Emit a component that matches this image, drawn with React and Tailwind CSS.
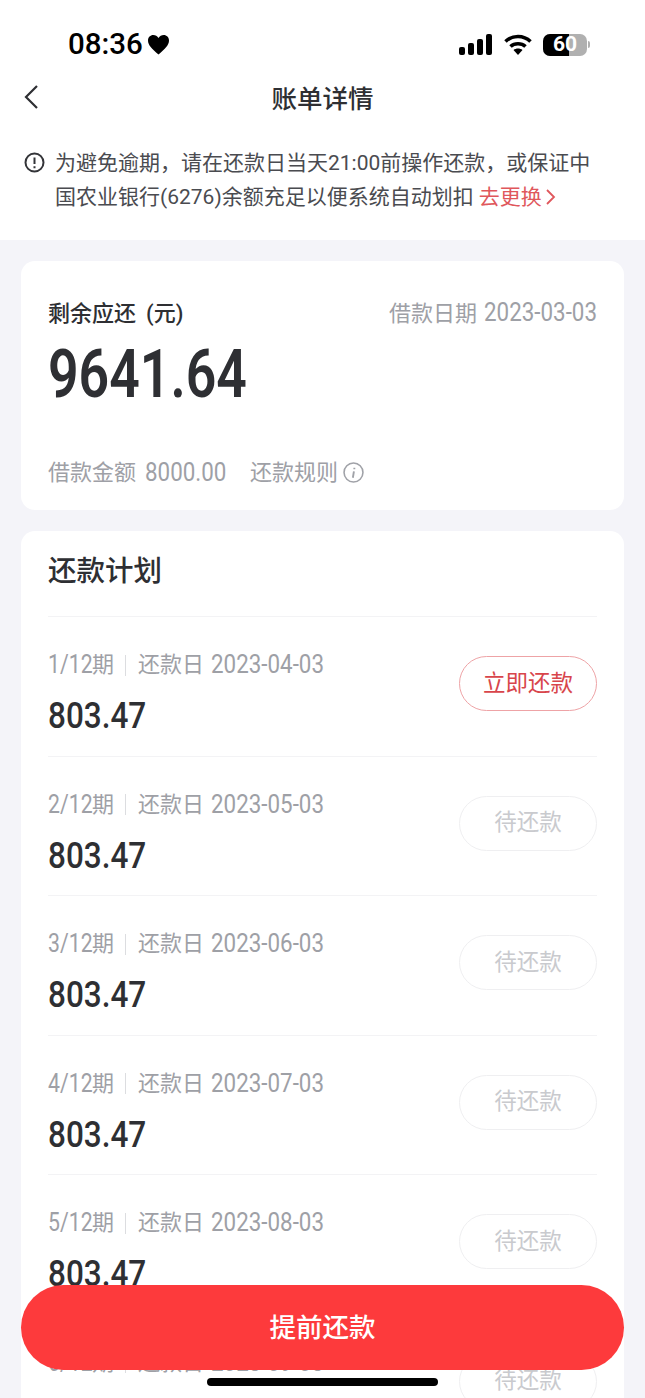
import React from "react";

const font = { fontFamily: '"Roboto", "Noto Sans CJK SC", sans-serif' };
const rows = [
  ["1/12", "2023-04-03", true],
  ["2/12", "2023-05-03", false],
  ["3/12", "2023-06-03", false],
  ["4/12", "2023-07-03", false],
  ["5/12", "2023-08-03", false],
  ["6/12", "2023-09-03", false],
];

function Row({ term, date, active }) {
  return (
    <div className="h-[139.5px] border-t border-[#f3f3f5] flex items-start justify-between">
      <div className="flex flex-col pt-[34px]">
        <div className="flex items-center text-[22px] leading-[28px] text-[#9ea0a6] whitespace-nowrap">
          <span className="flex items-center w-[77px]">
            <span className="inline-block w-[44px] origin-left scale-x-[0.85] text-[25px]">{term}</span>
            <span>期</span>
          </span>
          <span className="w-px h-[21px] shrink-0 bg-[#dcdde0] mr-[12px]" />
          <span>还款日</span>
          <span className="inline-block ml-[7px] origin-left scale-x-[0.895] text-[25px]">{date}</span>
        </div>
        <div className="inline-block origin-left scale-x-[0.875] text-[36px] leading-[40px] font-medium text-[#2e2f33] mt-[17px]">803.47</div>
      </div>
      <div
        className={
          active
            ? "w-[138px] h-[55px] mt-[39px] rounded-full border border-[#eea3a6] text-[#d8454b] text-[22.5px] flex items-center justify-center"
            : "w-[138px] h-[55px] mt-[39px] rounded-full border border-[#efeff1] text-[#c9cace] text-[22.5px] flex items-center justify-center"
        }
      >
        {active ? "立即还款" : "待还款"}
      </div>
    </div>
  );
}

export default function App() {
  return (
    <div className="relative w-[645px] h-[1398px] overflow-hidden bg-[#f4f4f9]" style={font}>
      <div className="bg-white h-[240px] flex flex-col">
        <div className="h-[78px] flex items-center justify-between pl-[68px] pr-[55px] pt-[11px]">
          <div className="flex items-center gap-[4px] text-black text-[29.5px] font-medium leading-none">
            <span>08:36</span>
            <svg width="23" height="21" viewBox="0 0 24 22"><path d="M12 21.5C5 15.5 1 11.5 1 6.8 1 3.4 3.5 1 6.5 1c2.300 0 4.300 1.200 5.500 3.300C13.200 2.200 15.200 1 17.500 1 20.500 1 23 3.400 23 6.800c0 4.700-4 8.700-11 14.700z" fill="#000" /></svg>
          </div>
          <div className="flex items-center gap-[11px]">
            <svg width="34" height="21" viewBox="0 0 34 21" fill="#000">
              <rect x="0" y="13" width="6" height="8" rx="2" />
              <rect x="9" y="9" width="6" height="12" rx="2" />
              <rect x="18" y="5" width="6" height="16" rx="2" />
              <rect x="27" y="0" width="6" height="21" rx="2" />
            </svg>
            <svg width="28" height="21" viewBox="0 0 28 21" fill="none" stroke="#000" strokeWidth="3.600">
              <path d="M1.500 7.500C8.500 .8 19.500 .8 26.500 7.500" />
              <path d="M6.500 12.500C10.500 8.800 17.500 8.800 21.500 12.500" />
              <path d="M14 21l-4.500-5c2.500-2 6.500-2 9 0z" fill="#000" stroke="none" />
            </svg>
            <div className="relative flex items-center">
              <div className="relative w-[44px] h-[22px] rounded-[7px] bg-[#b0b0b0] flex items-center justify-center text-[21px] font-bold leading-none text-white">
                <div className="absolute left-0 top-0 bottom-0 w-[26px] rounded-l-[7px] bg-black" />
                <span className="relative">60</span>
              </div>
              <div className="w-[2px] h-[7px] ml-[1px] rounded-r-full bg-[#b0b0b0]" />
            </div>
          </div>
        </div>
        <div className="relative h-[40px] flex items-center justify-center pt-[2px]">
          <svg className="absolute left-[23px] top-[6px]" width="16" height="26" viewBox="0 0 16 26" fill="none" stroke="#2e2f33" strokeWidth="2.200"><path d="M14 2L3 13l11 11" /></svg>
          <span className="text-[25.5px] font-medium text-[#2e2f33]">账单详情</span>
        </div>
        <div className="flex pl-[24px] pr-[40px] mt-[28px]">
          <svg className="mt-[6px] shrink-0" width="21" height="21" viewBox="0 0 21 21" fill="none" stroke="#333438" strokeWidth="2"><circle cx="10.500" cy="10.500" r="9" /><path d="M10.500 5.500v6.500M10.500 14.200v2" /></svg>
          <div className="ml-[10px] text-[21px] leading-[34px] text-[#4a4b50] whitespace-nowrap">
            <div>为避免逾期，请在还款日当天21:00前操作还款，或保证中</div>
            <div className="flex items-center">
              国农业银行(6276)余额充足以便系统自动划扣
              <span className="ml-[5px] text-[#e0575c]">去更换</span>
              <svg className="ml-[3px]" width="11" height="18" viewBox="0 0 11 18" fill="none" stroke="#e0575c" strokeWidth="1.800"><path d="M2 2l7 7-7 7" /></svg>
            </div>
          </div>
        </div>
      </div>

      <div className="px-[21px] pt-[21px] flex flex-col gap-[21px]">
        <div className="bg-white rounded-[14px] h-[249px] px-[27px] pt-[34px]">
          <div className="flex justify-between items-center h-[36px]">
            <span className="text-[22px] font-medium text-[#2e2f33] whitespace-nowrap">
              剩余应还
              <span className="ml-[10px]">(元)</span>
            </span>
            <span className="flex items-center text-[22px] text-[#9ea0a6] whitespace-nowrap">
              借款日期
              <span className="ml-[7px] w-[113px] inline-block origin-left scale-x-[0.895] text-[25px]">2023-03-03</span>
            </span>
          </div>
          <div className="inline-block origin-left scale-x-[0.8] text-[67px] leading-[72px] font-semibold text-[#2e2f33] mt-[7px]">9641.64</div>
          <div className="flex items-center mt-[44px] text-[22px] text-[#9ea0a6] whitespace-nowrap">
            借款金额
            <span className="ml-[9px] w-[81px] inline-block origin-left scale-x-[0.895] text-[25px]">8000.00</span>
            <span className="ml-[24px]">还款规则</span>
            <svg className="ml-[5px]" width="21" height="21" viewBox="0 0 20 20" fill="none" stroke="#a0a2a8" strokeWidth="1.500">
              <circle cx="10" cy="10" r="9" />
              <path d="M10.800 5.400v1.400M10.400 9l-1 6" strokeWidth="1.800" />
            </svg>
          </div>
        </div>

        <div className="bg-white rounded-[14px] px-[27px] pb-[40px]">
          <div className="h-[85px] pb-[3px] flex items-center text-[28.5px] font-medium text-[#2e2f33]">还款计划</div>
          {rows.map(([term, date, active]) => (
            <Row key={term} term={term} date={date} active={active} />
          ))}
        </div>
      </div>

      <div className="absolute left-[21px] right-[21px] top-[1285px] h-[85px] rounded-full bg-[#fd3a3c] flex items-center justify-center text-white text-[26.500px] font-medium">
        提前还款
      </div>
      <div className="absolute left-[207px] top-[1378px] w-[231px] h-[8px] rounded-full bg-black" />
    </div>
  );
}
